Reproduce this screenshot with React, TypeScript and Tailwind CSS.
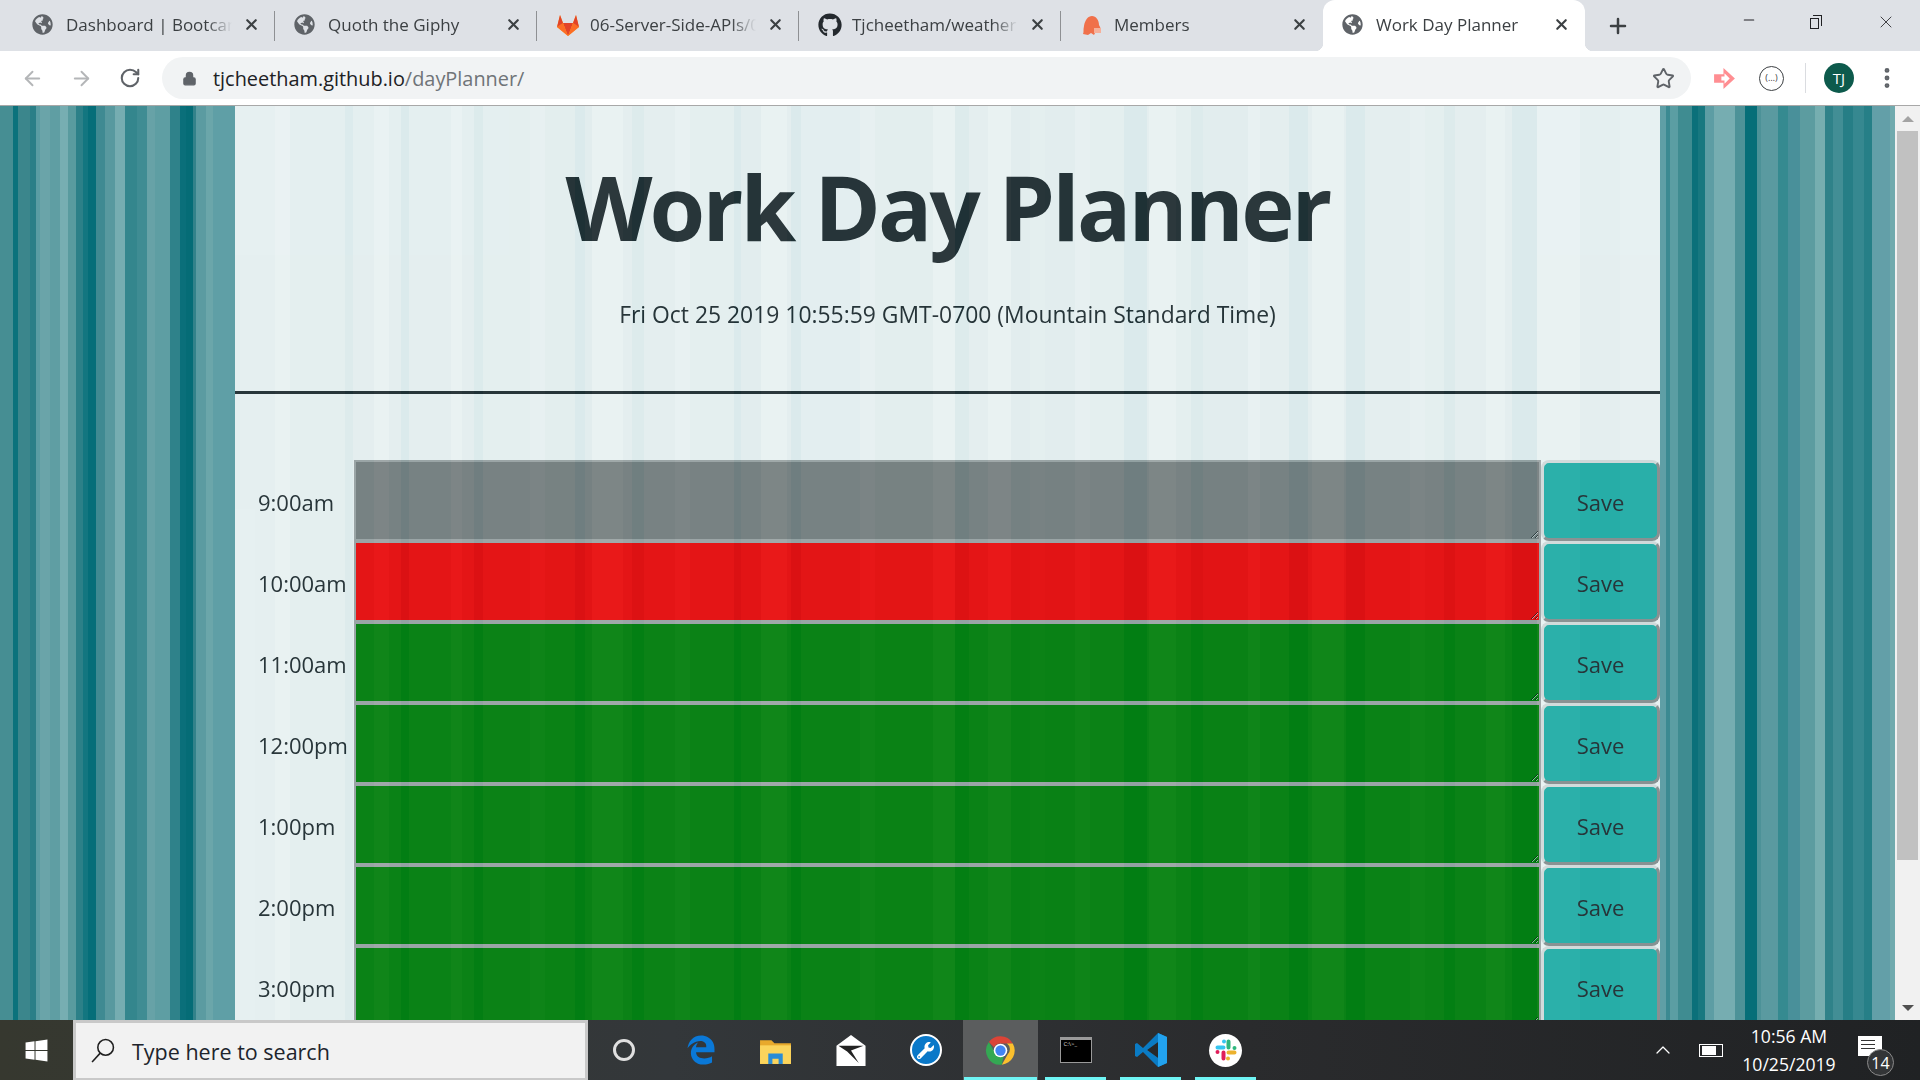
import { FaGithub, FaGlobeAmericas, FaWindows, FaWrench } from "react-icons/fa";
import { FaEdgeLegacy } from "react-icons/fa6";
import { ArrowLeft, ArrowRight, ChevronUp, EllipsisVertical, Lock, Minus, Plus, RotateCw, Star, X } from "lucide-react";
import type { ReactNode } from "react";

// [end x, colour] for the wallpaper stripes across the whole page
const stripes: [number, string][] = [
  [13, "#468e93"], [18, "#0b727c"], [30, "#3b868c"], [36, "#2a7f87"], [40, "#5a9da3"], [50, "#6aa4a9"],
  [60, "#5f9ea3"], [68, "#77aeb2"], [76, "#599b9f"], [83, "#2c8088"], [88, "#137680"], [96, "#056e79"],
  [105, "#3f8a92"], [115, "#58999f"], [125, "#76adb1"], [137, "#34868d"], [147, "#3f8c93"], [155, "#67a2a7"],
  [170, "#5e9ea3"], [180, "#2f828a"], [186, "#0a6f7a"], [193, "#056c76"], [196, "#33828a"], [206, "#5b9ba1"],
  [213, "#6ba6aa"], [235, "#5f9fa6"], [275, "#56989e"], [290, "#70a9ad"], [345, "#4e9499"], [353, "#1a7a84"], [374, "#4a9197"],
  [389, "#6fa8ad"], [401, "#4a9298"], [409, "#0f7680"], [451, "#4a9197"], [462, "#6fa8ad"], [474, "#4d9399"],
  [483, "#157983"], [530, "#4e9499"], [545, "#62a0a5"], [575, "#45908f"], [585, "#0f7680"], [592, "#3f8c93"],
  [623, "#70a9ad"], [632, "#4c9298"], [644, "#1a7a84"], [675, "#4b9298"], [690, "#6aa5a9"], [734, "#4e9499"],
  [741, "#0f7680"], [761, "#3f8c93"], [787, "#70a9ad"], [791, "#4a9298"], [801, "#0f7680"], [860, "#47909a"],
  [875, "#62a0a5"], [933, "#45908f"], [955, "#70a9ad"], [969, "#1a7a84"], [988, "#4a9298"], [1011, "#6fa8ad"],
  [1030, "#3c8a92"], [1045, "#4e9499"], [1075, "#3f8c93"], [1090, "#62a0a5"], [1124, "#4e9499"], [1147, "#0f7680"],
  [1149, "#4a9298"], [1176, "#70a9ad"], [1191, "#4e9499"], [1203, "#1a7a84"], [1248, "#3f8c93"], [1260, "#6aa5a9"],
  [1289, "#4a9298"], [1308, "#0f7680"], [1312, "#4a9298"], [1344, "#70a9ad"], [1346, "#4a9298"], [1365, "#0f7680"],
  [1410, "#4a9197"], [1425, "#62a0a5"], [1444, "#4e9499"], [1455, "#1a7a84"], [1486, "#4a9298"], [1505, "#70a9ad"],
  [1512, "#4a9298"], [1537, "#0f7680"], [1580, "#6ea8ac"], [1620, "#4a9298"], [1666, "#5f9fa6"], [1670, "#3b8a92"],
  [1678, "#5b9ea3"], [1692, "#3f8c91"], [1698, "#0b707a"], [1705, "#187880"], [1714, "#5d9da4"], [1735, "#76adb1"],
  [1745, "#4d9298"], [1757, "#056e78"], [1761, "#4c9298"], [1778, "#5a9aa0"], [1788, "#358a90"], [1800, "#49909a"],
  [1815, "#5c9ca0"], [1825, "#76aeb0"], [1833, "#2f8289"], [1843, "#428e95"], [1853, "#267e86"], [1864, "#368890"],
  [1872, "#267f87"], [1890, "#639fa8"], [1895, "#70aaae"],
];

function stripeGradient() {
  let from = 0;
  const parts = stripes.map(([end, color]) => {
    const part = `${color} ${from}px ${end}px`;
    from = end;
    return part;
  });
  return `linear-gradient(to right, ${parts.join(", ")})`;
}

const hours = [
  { label: "9:00am", color: "bg-[#808080]" },
  { label: "10:00am", color: "bg-[#ff0000]" },
  { label: "11:00am", color: "bg-[#008000]" },
  { label: "12:00pm", color: "bg-[#008000]" },
  { label: "1:00pm", color: "bg-[#008000]" },
  { label: "2:00pm", color: "bg-[#008000]" },
  { label: "3:00pm", color: "bg-[#008000]" },
];

function GitlabIcon() {
  return (
    <svg viewBox="0 0 24 24" className="h-6 w-6 shrink-0">
      <path d="M12 23 1 14l3-12 3 8h10l3-8 3 12z" fill="#fca326" />
      <path d="M12 23 7 10h10z" fill="#e24329" />
      <path d="M12 23 1 14l6-4zM12 23l11-9-6-4z" fill="#fc6d26" />
      <path d="M1 14 4 2l3 8zM23 14 20 2l-3 8z" fill="#e24329" />
    </svg>
  );
}

function MembersIcon() {
  return (
    <svg viewBox="0 0 24 24" className="h-6 w-6 shrink-0">
      <path d="M3 21c1-2 0-4 1-8 1-6 4-10 8-10s7 4 7 9c2 3 2 6 2 7l-6 1-1 2-3-2-3 2z" fill="#f0704a" />
      <path d="M14 15h7v5h-7z" fill="#f6b09a" />
    </svg>
  );
}

function Tab({ icon, title, active, noDivider }: { icon: ReactNode; title: string; active?: boolean; noDivider?: boolean }) {
  return (
    <div
      className={`relative flex h-[51px] w-[262px] shrink-0 items-center pb-[2px] pl-[19px] ${
        active ? "rounded-t-xl bg-white" : ""
      }`}
    >
      {icon}
      <span className="ml-[10px] w-[166px] overflow-hidden whitespace-nowrap text-[17px] text-[#3c4043] [mask-image:linear-gradient(to_right,black_85%,transparent)]">
        {title}
      </span>
      <X className="ml-[11px] h-[17px] w-[17px] shrink-0 text-[#3c4043]" strokeWidth={3} />
      {!active && !noDivider && <div className="absolute right-0 top-[11px] h-[30px] w-[1px] bg-[#8e9093]" />}
      {active && (
        <>
          <div className="absolute bottom-0 -left-[8px] h-[8px] w-[8px] bg-[radial-gradient(circle_at_0_0,transparent_8px,white_8.5px)]" />
          <div className="absolute bottom-0 -right-[8px] h-[8px] w-[8px] bg-[radial-gradient(circle_at_100%_0,transparent_8px,white_8.5px)]" />
        </>
      )}
    </div>
  );
}

const globe = <FaGlobeAmericas className="h-[21px] w-[21px] shrink-0 text-[#5f6368] mr-[3px]" />;

function ChromeTabs() {
  return (
    <div className="flex h-[51px] items-start bg-[#dee1e6] pl-[13px]">
      <Tab icon={globe} title="Dashboard | Bootcamp Spot" />
      <Tab icon={globe} title="Quoth the Giphy" />
      <Tab icon={<GitlabIcon />} title="06-Server-Side-APIs/01-Activities" />
      <Tab icon={<FaGithub className="h-6 w-6 shrink-0 text-[#24292e]" />} title="Tjcheetham/weatherDashboard" />
      <Tab icon={<MembersIcon />} title="Members" noDivider />
      <Tab icon={globe} title="Work Day Planner" active />
      <Plus className="ml-[21px] mt-[14px] h-[24px] w-[24px] shrink-0 text-[#3c4043]" strokeWidth={2.5} />
      <div className="ml-auto flex items-start text-[#202124]">
        <Minus className="mr-[53px] mt-[12px] h-[16px] w-[16px]" strokeWidth={1.75} />
        <div className="relative mr-[52px] mt-[15px] h-[14px] w-[14px]">
          <div className="absolute left-0 top-[3px] h-[11px] w-[9px] border border-[#202124]" />
          <div className="absolute left-[3px] top-0 h-[11px] w-[9px] border-r border-t border-[#202124]" />
        </div>
        <X className="mr-[24px] mt-[12px] h-[20px] w-[20px]" strokeWidth={1} />
      </div>
    </div>
  );
}

function Toolbar() {
  return (
    <div className="flex h-[55px] items-center border-b border-[#a8a8a8] bg-white">
      <ArrowLeft className="ml-[21px] h-[23px] w-[23px] text-[#b4b6b8]" strokeWidth={2} />
      <ArrowRight className="ml-[26px] h-[23px] w-[23px] text-[#b4b6b8]" strokeWidth={2} />
      <RotateCw className="ml-[26px] h-[22px] w-[22px] text-[#5f6368]" strokeWidth={2.25} />
      <div className="ml-[21px] flex h-[42px] w-[1529px] items-center rounded-full bg-[#f1f3f4] pl-[20px] pr-[16px]">
        <Lock className="h-[15px] w-[15px] text-[#5f6368]" fill="#5f6368" />
        <span className="ml-[16px] pt-[1px] text-[19.9px] text-[#202124]">
          tjcheetham.github.io<span className="text-[#6f7478]">/dayPlanner/</span>
        </span>
        <Star className="ml-auto h-[23px] w-[23px] text-[#5f6368]" strokeWidth={2} />
      </div>
      <svg viewBox="0 0 24 24" className="ml-[21px] h-[25px] w-[25px]">
        <path d="M2 8h9V2l11 10-11 10v-6H2z" fill="#ff8e92" />
        <path d="M9 10h3V7l5 5-5 5v-3H9z" fill="#fff" />
      </svg>
      <div className="ml-[22px] flex h-[25px] w-[25px] items-center justify-center rounded-full border border-[#3c4043] text-[9px] text-[#3c4043]">
        (…)
      </div>
      <div className="ml-[21px] h-[30px] w-[1px] bg-[#dadce0]" />
      <div className="ml-[18px] flex h-[30px] w-[30px] items-center justify-center rounded-full bg-[#0d5a4c] text-[15px] text-white">
        TJ
      </div>
      <EllipsisVertical className="ml-[20px] h-[26px] w-[26px] text-[#5f6368]" strokeWidth={2.5} />
    </div>
  );
}

function Planner() {
  return (
    <div className="min-h-0 flex-1 overflow-hidden" style={{ backgroundImage: stripeGradient() }}>
      <div className="flex h-full">
        <div className="flex-1 overflow-hidden">
          <div className="mx-auto w-[1425px] bg-white pb-10 text-[#212529] opacity-85">
            <header className="h-[285px] pt-[44px] text-center">
              <h1 className="text-[90px] font-bold leading-[112px] tracking-[-2.8px]">Work Day Planner</h1>
              <p className="mt-[38px] text-[22.9px] leading-[30px]">Fri Oct 25 2019 10:55:59 GMT-0700 (Mountain Standard Time)</p>
            </header>
            <hr className="border-t-[3px] border-[#212529]" />
            <div className="mt-[66px]">
              {hours.map((hour) => (
                <div key={hour.label} className="grid h-[81px] grid-cols-[119px_1fr_119px] items-center">
                  <div className="pl-[23px] pt-[4px] text-[22px]">{hour.label}</div>
                  <textarea
                    aria-label={hour.label}
                    className={`block h-[81px] w-full border-2 border-[#a9a9a9] ${hour.color}`}
                  />
                  <button className="h-[81px] rounded-lg border-[3px] border-b-[#8f8f8f] border-l-[#e4e4e4] border-r-[#8f8f8f] border-t-[#e4e4e4] bg-[#20b2aa] pt-[3px] text-[22px]">
                    Save
                  </button>
                </div>
              ))}
            </div>
          </div>
        </div>
        <Scrollbar />
      </div>
    </div>
  );
}

function Scrollbar() {
  return (
    <div className="flex w-[25px] shrink-0 flex-col items-center bg-[#f1f1f1]">
      <div className="mt-[10px] h-0 w-0 border-x-[6px] border-b-[6px] border-x-transparent border-b-[#a3a3a3]" />
      <div className="mt-[9px] h-[729px] w-[21px] bg-[#c1c1c1]" />
      <div className="mt-auto mb-[9px] h-0 w-0 border-x-[6px] border-t-[6px] border-x-transparent border-t-[#505050]" />
    </div>
  );
}

function TaskItem({ children, active, open }: { children: ReactNode; active?: boolean; open?: boolean }) {
  return (
    <div className={`relative flex h-[60px] w-[75px] items-center justify-center ${active ? "bg-[#5b5d5e]" : ""}`}>
      {children}
      {open && (
        <div className={`absolute bottom-0 h-[3px] bg-[#6ff5f5] ${active ? "left-[1px] right-[1px]" : "left-[7px] right-[7px]"}`} />
      )}
    </div>
  );
}

function ChromeLogo() {
  return (
    <svg viewBox="0 0 48 48" className="h-[31px] w-[31px]">
      <path d="M24 2a22 22 0 0 1 19 11H24a11 11 0 0 0-10 6L6 11A22 22 0 0 1 24 2z" fill="#db4437" />
      <path d="M43 13a22 22 0 0 1-17 33l9-16a11 11 0 0 0-1-17z" fill="#fbc02d" />
      <path d="M26 46A22 22 0 0 1 6 11l9 16a11 11 0 0 0 14 5z" fill="#34a853" />
      <circle cx="24" cy="24" r="10.5" fill="#fff" />
      <circle cx="24" cy="24" r="8" fill="#4285f4" />
    </svg>
  );
}

function SlackLogo() {
  return (
    <div className="flex h-[33px] w-[33px] items-center justify-center rounded-full bg-white">
      <svg viewBox="0 0 24 24" className="h-[24px] w-[24px]" strokeWidth={4} strokeLinecap="round" fill="none">
        <path d="M3.5 9.5h6M10 3.5h0" stroke="#36c5f0" />
        <path d="M14.5 3.5v6M20.5 10h0" stroke="#2eb67d" />
        <path d="M14.5 14.5h6M14 20.5h0" stroke="#ecb22e" />
        <path d="M9.5 14.5v6M3.5 14h0" stroke="#e01e5a" />
      </svg>
    </div>
  );
}

function Taskbar() {
  return (
    <div className="flex h-[60px] items-stretch bg-[linear-gradient(to_right,#36382f,#33373a_35%,#2a2b2d_65%,#202224)] text-white">
      <div className="flex w-[73px] items-center justify-center">
        <FaWindows className="h-[25px] w-[25px]" />
      </div>
      <div className="flex w-[515px] items-center border-[3px] border-b-[2px] border-[#c9c9c9] bg-[#f2f2f2] pl-[14px]">
        <svg viewBox="0 0 24 24" className="h-[25px] w-[25px] text-[#1f1f1f]" fill="none" stroke="currentColor" strokeWidth={1.5}>
          <circle cx="15" cy="9" r="7.5" />
          <path d="M9.8 14.5 2 23" />
        </svg>
        <span className="ml-[17px] pt-[4px] text-[21.5px] text-[#20242c]">Type here to search</span>
      </div>
      <TaskItem>
        <div className="mr-[3px] h-[22px] w-[22px] rounded-full border-[3.5px] border-[#e0e0e0]" />
      </TaskItem>
      <TaskItem>
        <FaEdgeLegacy className="h-[34px] w-[30px] text-[#0a78d7]" />
      </TaskItem>
      <TaskItem>
        <svg viewBox="0 0 32 32" className="h-[33px] w-[33px]">
          <path d="M1 6h11l3 3h16v20H1z" fill="#e8a92c" />
          <path d="M1 11h30v18H1z" fill="#fbd45c" />
          <path d="M9 19h14v10h-4v-5h-6v5H9z" fill="#2a8cd6" />
        </svg>
      </TaskItem>
      <TaskItem>
        <svg viewBox="0 0 34 32" className="h-[31px] w-[34px]">
          <path d="M2 11 17 0l15 11v21H2z" fill="#fff" />
          <path d="M4 11h26L17 16l8 13-12-12z" fill="#222" />
        </svg>
      </TaskItem>
      <TaskItem>
        <div className="flex h-[32px] w-[32px] items-center justify-center rounded-full border-2 border-white bg-[#0a78c8]">
          <FaWrench className="h-[17px] w-[17px]" />
        </div>
      </TaskItem>
      <TaskItem active open>
        <ChromeLogo />
      </TaskItem>
      <TaskItem open>
        <div className="h-[26px] w-[32px] border border-[#9a9a9a] border-t-[3px] bg-black pl-[3px] text-[6px] leading-[9px] text-[#d8d8d8]">
          C:\&gt;_
        </div>
      </TaskItem>
      <TaskItem open>
        <svg viewBox="0 0 32 36" className="h-[36px] w-[32px]">
          <path d="M23 1 32 5v26l-9 4L8 20l-6 5-2-1V12l2-1 6 5z" fill="#0a7bc4" />
          <path d="M23 1 32 5v26l-9 4zM23 10 12 18l11 8z" fill="#22a2ee" />
          <path d="M23 10 12 18l11 8z" fill="#26282a" />
        </svg>
      </TaskItem>
      <TaskItem open>
        <SlackLogo />
      </TaskItem>
      <div className="ml-auto flex items-center">
        <ChevronUp className="h-[24px] w-[24px]" strokeWidth={1.25} />
        <div className="ml-[24px] flex h-[13px] w-[24px] items-center border border-white pl-[2px]">
          <div className="h-[9px] w-[14px] bg-white" />
        </div>
        <div className="ml-[11px] flex w-[110px] flex-col items-center gap-[8px] pb-[1px] text-[17.6px] leading-[20px]">
          <span>10:56 AM</span>
          <span>10/25/2019</span>
        </div>
        <div className="relative ml-[14px] mr-[38px] mb-[8px] h-[20px] w-[24px] bg-white pl-[3px] pt-[4px]">
          <div className="mb-[3px] h-[1px] w-[14px] bg-[#333]" />
          <div className="mb-[3px] h-[1px] w-[14px] bg-[#333]" />
          <div className="h-[1px] w-[14px] bg-[#333]" />
          <div className="absolute -bottom-[20px] -right-[12px] flex h-[27px] w-[27px] items-center justify-center rounded-full border border-[#8a8a8a] bg-[#333537] text-[16px] text-white">
            14
          </div>
        </div>
      </div>
    </div>
  );
}

export default function App() {
  return (
    <div className="flex h-screen flex-col overflow-hidden font-['Open_Sans',sans-serif]">
      <ChromeTabs />
      <Toolbar />
      <Planner />
      <Taskbar />
    </div>
  );
}
